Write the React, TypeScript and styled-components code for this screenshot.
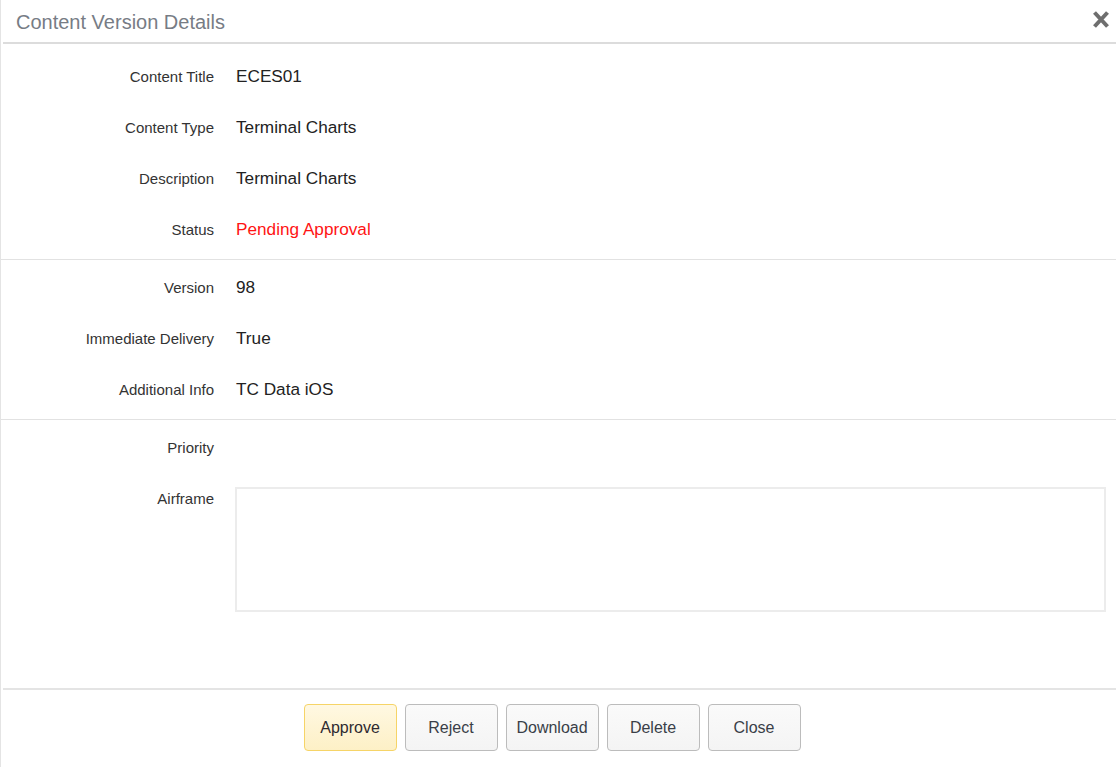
import { FC } from 'react';
import styled, { createGlobalStyle } from 'styled-components';

const GlobalStyle = createGlobalStyle`
  html, body {
    margin: 0;
    padding: 0;
    background: #fff;
  }
  body {
    font-family: 'Liberation Sans', Arial, sans-serif;
  }
`;

export const Panel = styled.article`
  box-sizing: border-box;
  width: 1116px;
  height: 767px;
  display: flex;
  flex-direction: column;
  border-left: 1px solid #e4e4e4;
  background: #fff;
  overflow: hidden;
`;

export const Header = styled.header`
  display: flex;
  align-items: center;
  justify-content: space-between;
  box-sizing: border-box;
  height: 44px;
  margin-left: 2px;
  padding: 2px 3px 0 13px;
  border-bottom: 2px solid #dcdcdc;
`;

export const Title = styled.h2`
  margin: 0;
  font-size: 20px;
  font-weight: normal;
  color: #777c85;
`;

export const CloseIcon = styled.button`
  display: flex;
  align-items: center;
  justify-content: center;
  width: 24px;
  height: 24px;
  margin-top: -6px;
  padding: 0;
  border: 0;
  background: transparent;
  cursor: pointer;
`;

export const Section = styled.section<{ $grow?: boolean; $divider?: boolean; $first?: boolean }>`
  display: flex;
  flex-direction: column;
  padding: ${({ $first }) => ($first ? '7px' : '2px')} 10px 4px 0;
  ${({ $divider }) => ($divider ? 'border-bottom: 1px solid #e2e2e2;' : '')}
  ${({ $grow }) => ($grow ? 'flex: 1;' : '')}
`;

export const Row = styled.div`
  display: grid;
  grid-template-columns: 213px 1fr;
  column-gap: 21px;
  align-items: start;
`;

export const Label = styled.div`
  height: 51px;
  line-height: 51px;
  text-align: right;
  font-size: 15px;
  color: #333;
`;

export const Value = styled.div<{ $alert?: boolean }>`
  height: 51px;
  line-height: 51px;
  padding-left: 1px;
  font-size: 17.2px;
  color: ${({ $alert }) => ($alert ? '#ff1414' : '#222')};
`;

export const Area = styled.div`
  box-sizing: border-box;
  height: 125px;
  margin-top: 14px;
  border: 2px solid #ececec;
  background: #fff;
`;

export const Footer = styled.footer`
  display: flex;
  justify-content: center;
  gap: 8px;
  margin-left: 2px;
  padding: 14px 15px 16px 0;
  border-top: 2px solid #e4e4e4;
`;

export const Button = styled.button<{ $primary?: boolean }>`
  box-sizing: border-box;
  width: 93px;
  height: 47px;
  border-radius: 4px;
  font-family: 'Liberation Sans', Arial, sans-serif;
  font-size: 16px;
  cursor: pointer;
  border: 1px solid ${({ $primary }) => ($primary ? '#f6d467' : '#bcbcbc')};
  color: ${({ $primary }) => ($primary ? '#2e2a30' : '#3a3f48')};
  background: ${({ $primary }) =>
    $primary ? 'linear-gradient(#fff8e2, #fdf0c6)' : 'linear-gradient(#fafafa, #f4f4f4)'};
`;

const details = [
  { label: 'Content Title', value: 'ECES01' },
  { label: 'Content Type', value: 'Terminal Charts' },
  { label: 'Description', value: 'Terminal Charts' },
  { label: 'Status', value: 'Pending Approval', alert: true },
];

const delivery = [
  { label: 'Version', value: '98' },
  { label: 'Immediate Delivery', value: 'True' },
  { label: 'Additional Info', value: 'TC Data iOS' },
];

const actions = ['Approve', 'Reject', 'Download', 'Delete', 'Close'];

const App: FC = () => (
  <>
    <GlobalStyle />
    <Panel>
      <Header>
        <Title>Content Version Details</Title>
        <CloseIcon aria-label='Close'>
          <svg width='18' height='19' viewBox='0 0 18 19'>
            <path d='M2.5 2.5 L15.5 16.5 M15.5 2.5 L2.5 16.5' stroke='#6e6e6e' strokeWidth='4' strokeLinecap='butt' />
          </svg>
        </CloseIcon>
      </Header>

      <Section $divider $first>
        {details.map((item) => (
          <Row key={item.label}>
            <Label>{item.label}</Label>
            <Value $alert={item.alert}>{item.value}</Value>
          </Row>
        ))}
      </Section>

      <Section $divider>
        {delivery.map((item) => (
          <Row key={item.label}>
            <Label>{item.label}</Label>
            <Value>{item.value}</Value>
          </Row>
        ))}
      </Section>

      <Section $grow>
        <Row>
          <Label>Priority</Label>
          <Value />
        </Row>
        <Row>
          <Label>Airframe</Label>
          <Area />
        </Row>
      </Section>

      <Footer>
        {actions.map((action) => (
          <Button key={action} $primary={action === 'Approve'}>
            {action}
          </Button>
        ))}
      </Footer>
    </Panel>
  </>
);

export default App;
